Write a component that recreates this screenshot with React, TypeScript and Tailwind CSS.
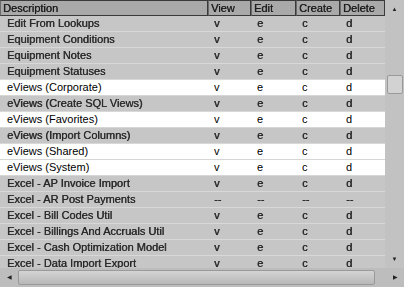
import React from "react";

type Row = { name: string; active?: boolean; none?: boolean };

const rows: Row[] = [
  { name: "Edit From Lookups" },
  { name: "Equipment Conditions" },
  { name: "Equipment Notes" },
  { name: "Equipment Statuses" },
  { name: "eViews (Corporate)", active: true },
  { name: "eViews (Create SQL Views)" },
  { name: "eViews (Favorites)", active: true },
  { name: "eViews (Import Columns)" },
  { name: "eViews (Shared)", active: true },
  { name: "eViews (System)", active: true },
  { name: "Excel - AP Invoice Import" },
  { name: "Excel - AR Post Payments", none: true },
  { name: "Excel - Bill Codes Util" },
  { name: "Excel - Billings And Accruals Util" },
  { name: "Excel - Cash Optimization Model" },
  { name: "Excel - Data Import Export" },
];

const cols = [
  { label: "View", w: "w-[43px]", val: "v" },
  { label: "Edit", w: "w-[45px]", val: "e" },
  { label: "Create", w: "w-[44px]", val: "c" },
  { label: "Delete", w: "w-[45px]", val: "d" },
];

// blurred, smudged look of the disabled rows
const dim = "inline-block [filter:blur(0.7px)] [text-shadow:0.4px_0_0_#333]";

const HeaderCell = ({ label, w }: { label: string; w: string }) => (
  <div className={`${w} h-full shrink-0 border border-[#3a3a3a] border-l-[#6a6a6a] bg-[#a9a9a9] pl-[2px] leading-[14px]`}>
    <span className={`${dim} text-[#1a1a1a]`}>{label}</span>
  </div>
);

export default function App() {
  return (
    <div
      className="flex h-[287px] w-[404px] flex-col overflow-hidden bg-[#c4c4c4] text-[11px]"
      style={{ fontFamily: "'Liberation Sans', Arial, sans-serif" }}
    >
      <div className="flex h-[268px]">
        <div className="flex w-[385px] flex-col overflow-hidden">
          <div className="flex h-[16px] shrink-0">
            <HeaderCell label="Description" w="w-[208px]" />
            {cols.map((c) => (
              <HeaderCell key={c.label} label={c.label} w={c.w} />
            ))}
          </div>
          {rows.map((r) => (
            <div
              key={r.name}
              className={`flex h-[16px] shrink-0 border-b leading-[15px] ${
                r.active
                  ? "border-[#d6d6d6] bg-white text-black"
                  : "border-[#d8d8d8] bg-[#c6c6c6] text-[#2a2a2a]"
              }`}
            >
              <div className="w-[208px] shrink-0 pl-[7px]">
                <span className={r.active ? "" : dim}>{r.name}</span>
              </div>
              {cols.map((c) => (
                <div key={c.label} className={`${c.w} shrink-0 pl-[6px]`}>
                  <span className={r.active ? "" : dim}>{r.none ? "--" : c.val}</span>
                </div>
              ))}
            </div>
          ))}
        </div>
        <div className="flex w-[19px] flex-col items-center bg-[#c2c2c2]">
          <div className="flex h-[18px] items-center justify-center text-[6px] text-[#222] blur-[0.4px]">▲</div>
          <div className="mt-[57px] h-[19px] w-[16px] rounded-[2px] border border-[#9a9a9a] bg-[#d2d2d2]" />
          <div className="flex-1" />
          <div className="flex h-[18px] items-center justify-center text-[6px] text-[#222] blur-[0.4px]">▼</div>
        </div>
      </div>
      <div className="flex h-[19px] items-center bg-[#bdbdbd]">
        <div className="flex w-[18px] items-center justify-center text-[6px] text-[#222] blur-[0.4px]">◀</div>
        <div className="h-[15px] w-[357px] rounded-[2px] border border-[#9a9a9a] bg-gradient-to-b from-[#d4d4d4] to-[#b8b8b8]" />
        <div className="flex-1" />
        <div className="flex w-[18px] items-center justify-center text-[6px] text-[#222] blur-[0.4px]">▶</div>
      </div>
    </div>
  );
}
